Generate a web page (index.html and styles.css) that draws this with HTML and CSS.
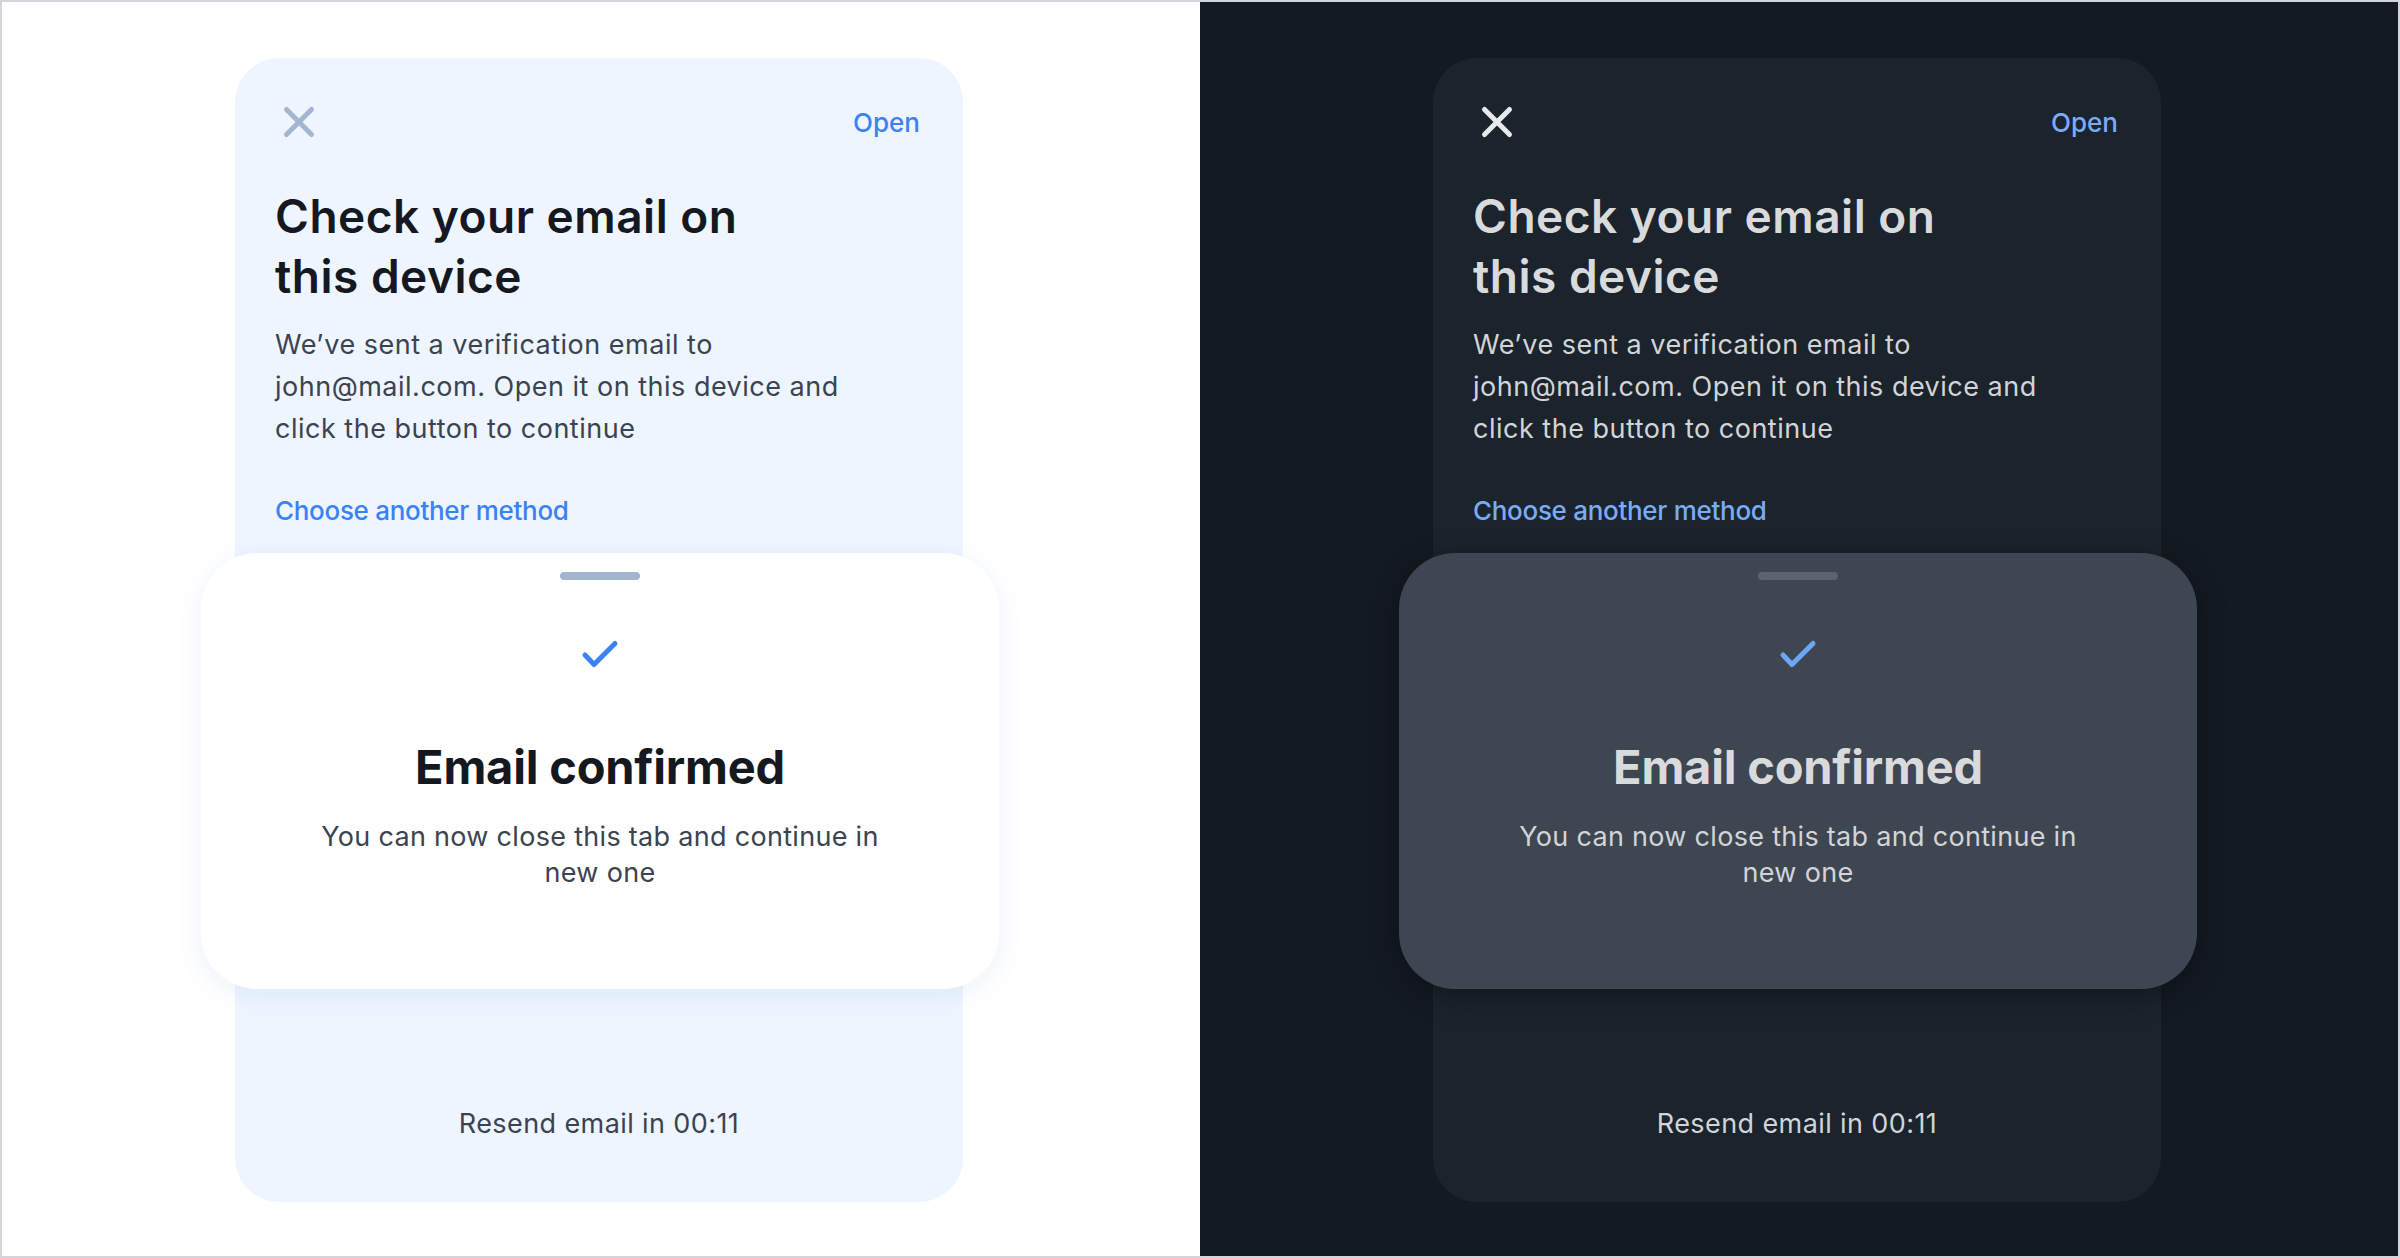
FILE: index.html
```html
<!DOCTYPE html>
<html lang="en">
<head>
  <meta charset="UTF-8">
  <title>Check your email</title>
  <link rel="stylesheet" href="styles.css">
</head>
<body>

  <div class="frame">

    <!-- light theme -->
    <section class="panel light">
      <div class="card">
        <div class="topbar">
          <button class="close" aria-label="Close">
            <svg width="48" height="48" viewBox="0 0 48 48"><path d="M11.5 11.5 L36.5 36.5 M36.5 11.5 L11.5 36.5" /></svg>
          </button>
          <a class="open" href="#">Open</a>
        </div>

        <h1>Check your email on<br>this device</h1>
        <p class="text">We’ve sent a verification email to john@mail.com. Open it on this device and click the button to continue</p>
        <a class="method" href="#">Choose another method</a>

        <div class="spacer"></div>
        <p class="resend">Resend email in 00:11</p>

        <div class="sheet">
          <div class="handle"></div>
          <svg class="check" width="40" height="30" viewBox="0 0 40 30"><path d="M5 16 L14 25.5 L35 4.5" /></svg>
          <h2>Email confirmed</h2>
          <p class="note">You can now close this tab and continue in new one</p>
        </div>
      </div>
    </section>

    <!-- dark theme -->
    <section class="panel dark">
      <div class="card">
        <div class="topbar">
          <button class="close" aria-label="Close">
            <svg width="48" height="48" viewBox="0 0 48 48"><path d="M11.5 11.5 L36.5 36.5 M36.5 11.5 L11.5 36.5" /></svg>
          </button>
          <a class="open" href="#">Open</a>
        </div>

        <h1>Check your email on<br>this device</h1>
        <p class="text">We’ve sent a verification email to john@mail.com. Open it on this device and click the button to continue</p>
        <a class="method" href="#">Choose another method</a>

        <div class="spacer"></div>
        <p class="resend">Resend email in 00:11</p>

        <div class="sheet">
          <div class="handle"></div>
          <svg class="check" width="40" height="30" viewBox="0 0 40 30"><path d="M5 16 L14 25.5 L35 4.5" /></svg>
          <h2>Email confirmed</h2>
          <p class="note">You can now close this tab and continue in new one</p>
        </div>
      </div>
    </section>

  </div>

</body>
</html>
```

FILE: styles.css
```css
body {
  margin: 0;
  font-family: Inter, "Open Sans", sans-serif;
}

.frame {
  width: 2400px;
  height: 1258px;
  box-sizing: border-box;
  border: 2px solid #d2d5da;
  display: grid;
  grid-template-columns: 1fr 1fr;
}

/* theme colours */
.light {
  --page: #ffffff;
  --card: #eef5ff;
  --sheet: #ffffff;
  --sheet-shadow: 0 6px 26px rgba(70, 120, 200, 0.10);
  --icon: #a3b6cf;
  --title: #15191f;
  --text: #3c4350;
  --link: #3b82f6;
  --handle: #a2b5cd;
  --check: #3b82f6;
}

.dark {
  --page: #141a21;
  --card: #1b232c;
  --sheet: #3e4651;
  --sheet-shadow: 0 6px 30px rgba(0, 0, 0, 0.35);
  --icon: #e8e9ea;
  --title: #d9dadc;
  --text: #d2d4d7;
  --link: #78acf6;
  --handle: #5a636e;
  --check: #6ea6f5;
}

.panel {
  background: var(--page);
  padding-top: 56px;
}

.card {
  position: relative;
  width: 728px;
  height: 1144px;
  margin-left: 233px;
  box-sizing: border-box;
  padding: 40px 40px 57px;
  border-radius: 44px;
  background: var(--card);
  display: flex;
  flex-direction: column;
}

.topbar {
  height: 48px;
  display: flex;
  justify-content: space-between;
  align-items: center;
}

.close {
  width: 48px;
  height: 48px;
  padding: 0;
  border: none;
  background: none;
}

.close svg path {
  fill: none;
  stroke: var(--icon);
  stroke-width: 5;
  stroke-linecap: round;
}

.open {
  color: var(--link);
  font-size: 26px;
  font-weight: 500;
  text-decoration: none;
  margin-right: 3px;
}

h1 {
  margin: 40px 0 0;
  color: var(--title);
  font-size: 46px;
  line-height: 60px;
  font-weight: 600;
  letter-spacing: 0.5px;
}

.text {
  margin: 18px 0 0;
  color: var(--text);
  font-size: 27px;
  line-height: 42px;
  letter-spacing: 0.5px;
  max-width: 590px;
}

.method {
  margin-top: 40px;
  color: var(--link);
  font-size: 26px;
  line-height: 42px;
  font-weight: 500;
  letter-spacing: -0.3px;
  text-decoration: none;
}

.spacer {
  flex: 1;
}

.resend {
  margin: 0;
  color: var(--text);
  font-size: 27px;
  line-height: 42px;
  letter-spacing: 0.4px;
  text-align: center;
}

/* bottom sheet that slides over the card */
.sheet {
  position: absolute;
  top: 495px;
  left: -34px;
  width: 798px;
  height: 436px;
  box-sizing: border-box;
  padding-top: 19px;
  border-radius: 56px;
  background: var(--sheet);
  box-shadow: var(--sheet-shadow);
  display: flex;
  flex-direction: column;
  align-items: center;
}

.handle {
  width: 80px;
  height: 8px;
  border-radius: 4px;
  background: var(--handle);
}

.check {
  margin-top: 59px;
}

.check path {
  fill: none;
  stroke: var(--check);
  stroke-width: 5;
  stroke-linecap: round;
  stroke-linejoin: round;
}

h2 {
  margin: 70px 0 0;
  color: var(--title);
  font-size: 47px;
  line-height: 56px;
  font-weight: 700;
  letter-spacing: -0.2px;
}

.note {
  margin: 24px 0 0;
  max-width: 588px;
  color: var(--text);
  font-size: 27px;
  line-height: 36px;
  letter-spacing: 0.3px;
  text-align: center;
}
```
